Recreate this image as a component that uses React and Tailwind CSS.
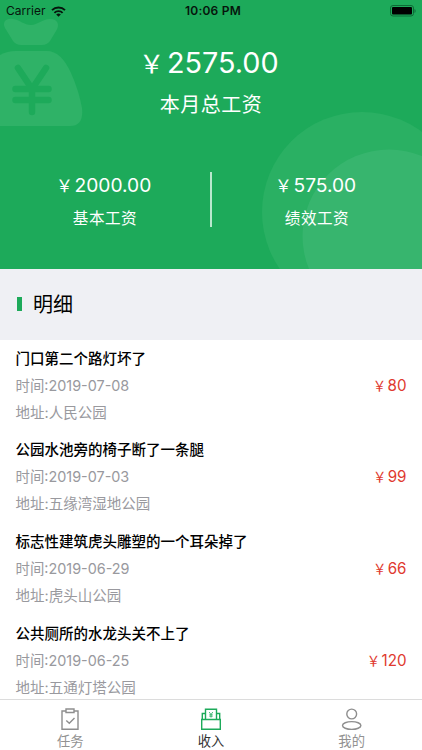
import React from 'react';

const records = [
  { id: 1, title: '门口第二个路灯坏了', date: '2019-07-08', address: '人民公园', amount: '80' },
  { id: 2, title: '公园水池旁的椅子断了一条腿', date: '2019-07-03', address: '五缘湾湿地公园', amount: '99' },
  { id: 3, title: '标志性建筑虎头雕塑的一个耳朵掉了', date: '2019-06-29', address: '虎头山公园', amount: '66' },
  { id: 4, title: '公共厕所的水龙头关不上了', date: '2019-06-25', address: '五通灯塔公园', amount: '120' },
];

const StatusBar = () => (
  <div className="h-[22px] pl-[6px] pr-[6px] grid grid-cols-3 items-center text-[12px] leading-[22px] text-[#06150c]">
    <div className="flex items-center gap-[5px]">
      <span className="tracking-[0.05px]">Carrier</span>
      <svg width="15" height="11" viewBox="0 0 15 11" fill="none" stroke="currentColor" strokeWidth="1.9">
        <path d="M1 4.2a9.2 9.2 0 0 1 13 0" />
        <path d="M3.4 6.8a5.8 5.8 0 0 1 8.2 0" />
        <path d="M7.5 10.8 5.2 8.5a3.3 3.3 0 0 1 4.6 0z" fill="currentColor" stroke="none" />
      </svg>
    </div>
    <span className="text-center font-semibold tracking-[0.2px] pl-[4px]">10:06 PM</span>
    <svg className="justify-self-end" width="27" height="12" viewBox="0 0 27 12">
      <rect x="1.5" y="0.5" width="23" height="10.5" rx="2.5" fill="none" stroke="#0d6b36" />
      <rect x="3" y="2" width="20" height="7.5" rx="1" fill="#000" />
      <path d="M25.5 4v4c1.5-.6 1.5-3.4 0-4z" fill="#0d6b36" />
    </svg>
  </div>
);

const HeaderArt = () => (
  <svg className="absolute inset-0" width="422" height="269" viewBox="0 0 422 269">
    <circle cx="362" cy="212" r="100" fill="#2ab063" />
    <circle cx="389" cy="236" r="86.5" fill="#37b56e" />
    {/* Money bag */}
    <g fill="#2fb267">
      <path d="M5 28C2 22 6 18 13 19C20 20 24 25 31 25C38 25 42 19 50 19C58 19 60 25 56 31L50 41Q47 45 42 45H21Q16 45 13 41Z" />
      <path d="M-8 126V61Q2 51 16 51H47Q61 51 71 73Q79 91 82 108Q84 126 70 126Z" />
    </g>
    <path
      d="M18 68L32 89L46 68M32 89V112M15.5 89H48.5M15.5 100H48.5"
      fill="none"
      stroke="#1daa5a"
      strokeWidth="6.5"
      strokeLinecap="round"
      strokeLinejoin="round"
    />
  </svg>
);

// Full-width yen sign, pulled left to trim its side bearing
const Money = ({ value, className }) => (
  <p className={`whitespace-nowrap ${className}`}>
    <span className="ml-[-0.17em] mr-[0.1em] text-[0.88em] leading-none">￥</span>
    {value}
  </p>
);

const SubTotal = ({ amount, label }) => (
  <div className="flex-1 flex flex-col items-center">
    <Money value={amount} className="text-[19.2px] leading-[26px]" />
    <p className="mt-[10px] text-[15.6px] leading-[21px] tracking-[0.5px]">{label}</p>
  </div>
);

const RecordRow = ({ record }) => (
  <li className="h-[91.7px] px-[15.5px] pt-[8px] flex justify-between">
    <div>
      <h3 className="text-[14.5px] leading-[22px] font-medium text-black">{record.title}</h3>
      <p className="mt-[5px] text-[14.4px] leading-[22px] text-[#99999e]">时间:{record.date}</p>
      <p className="mt-[5px] text-[14.5px] leading-[22px] text-[#99999e]">地址:{record.address}</p>
    </div>
    <Money value={record.amount} className="mt-[27px] text-[15.2px] leading-[22px] text-[#e0392f]" />
  </li>
);

const TaskIcon = () => (
  <svg width="22" height="24" viewBox="0 0 22 24" fill="none" stroke="#8e8e8e" strokeWidth="1.4">
    <path d="M7 4H3v18.3h16V4h-4" />
    <path d="M7 2h8v3.5H7z" />
    <path d="M7.3 13.5l3 2.8 5.2-5.3" />
  </svg>
);

const IncomeIcon = () => (
  <svg width="22" height="24" viewBox="0 0 22 24" fill="none" stroke="#1daa5a" strokeWidth="1.4">
    <path d="M5.5 12.5V2.2h11v10.3" />
    <path d="M5.5 6.5H2.3v6M16.5 6.5h3.2v6" />
    <path d="M1.7 12.5h18.6v9.8H1.7z" />
    <path d="M9.2 5L11 7.6l1.8-2.6M11 7.6v3M9.3 7.8h3.4M9.3 9.2h3.4" strokeWidth="0.8" />
  </svg>
);

const ProfileIcon = () => (
  <svg width="22" height="24" viewBox="0 0 22 24" fill="none" stroke="#8e8e8e" strokeWidth="1.4">
    <circle cx="10.7" cy="7" r="4.9" />
    <ellipse cx="10.7" cy="18.5" rx="9.2" ry="3.9" />
  </svg>
);

const tabs = [
  { label: '任务', icon: TaskIcon },
  { label: '收入', icon: IncomeIcon, active: true },
  { label: '我的', icon: ProfileIcon },
];

const TabBar = () => (
  <nav className="h-[51px] shrink-0 border-t border-[#dcdcdc] bg-white grid grid-cols-3">
    {tabs.map((tab) => (
      <div key={tab.label} className="flex flex-col items-center pt-[7px]">
        <tab.icon />
        <span
          className={`text-[13.3px] leading-[20px] ${tab.active ? 'text-[#333333]' : 'text-[#929292]'}`}
        >
          {tab.label}
        </span>
      </div>
    ))}
  </nav>
);

const App = () => {
  return (
    <div className="w-[422px] h-[750px] flex flex-col overflow-hidden bg-white font-[Inter,'Noto_Sans_CJK_SC',sans-serif]">
      {/* Summary */}
      <header className="relative h-[269px] shrink-0 overflow-hidden bg-[#1daa5a] text-white">
        <HeaderArt />
        <div className="relative">
          <StatusBar />
          <div className="mt-[23px] flex flex-col items-center">
            <Money value="2575.00" className="text-[28.8px] leading-[36px]" />
            <p className="mt-[10px] text-[20px] leading-[28px] tracking-[0.5px]">本月总工资</p>
          </div>
          <div className="mt-[53px] flex">
            <SubTotal amount="2000.00" label="基本工资" />
            <div className="w-[2px] h-[55px] bg-[#b9e8cd]" />
            <SubTotal amount="575.00" label="绩效工资" />
          </div>
        </div>
      </header>

      {/* Section title */}
      <div className="h-[70.5px] shrink-0 bg-[#eff0f4] flex items-center pl-[17px] gap-[11px]">
        <span className="w-[5px] h-[14px] bg-[#1daa5a]" />
        <h2 className="pt-[2px] text-[20px] leading-[28px] text-black">明细</h2>
      </div>

      <ul className="flex-1 min-h-0 overflow-hidden">
        {records.map((record) => (
          <RecordRow key={record.id} record={record} />
        ))}
      </ul>

      <TabBar />
    </div>
  );
};

export default App;
